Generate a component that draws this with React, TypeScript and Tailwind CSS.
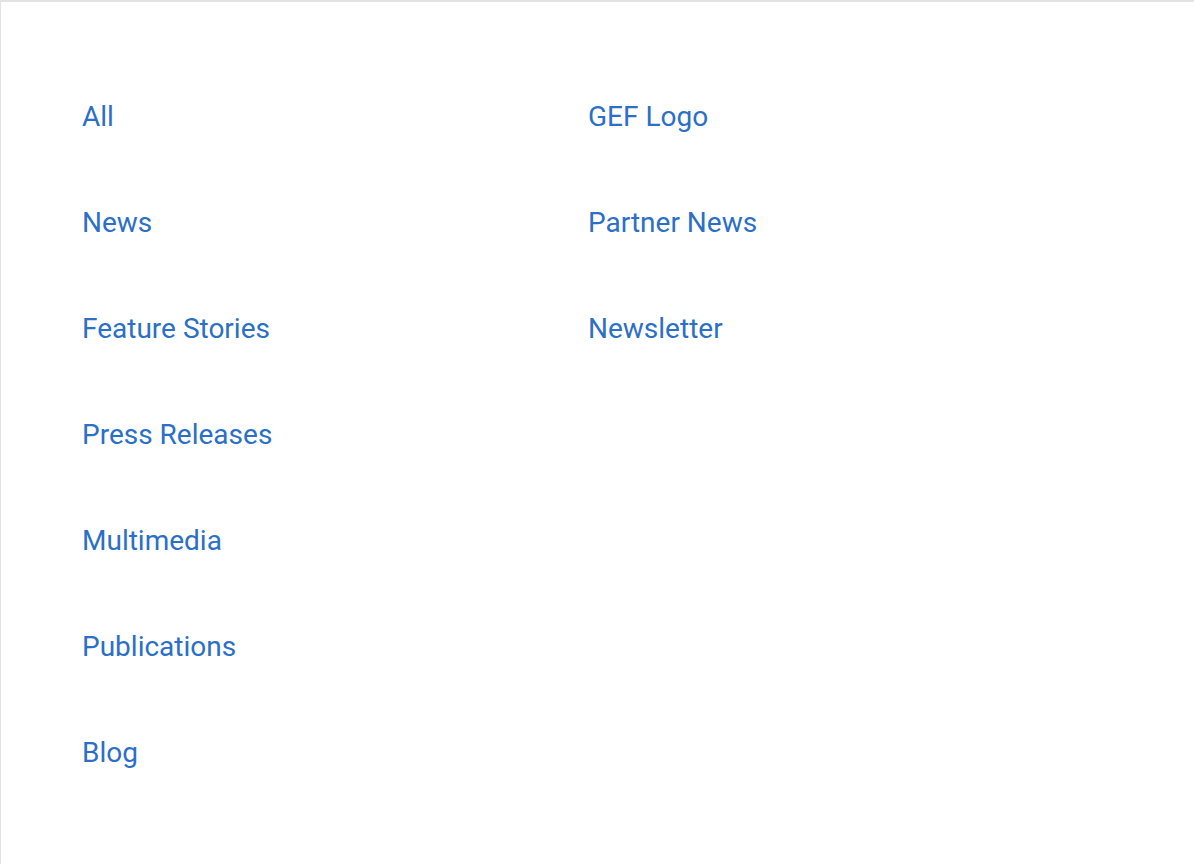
const leftLinks = [
  'All',
  'News',
  'Feature Stories',
  'Press Releases',
  'Multimedia',
  'Publications',
  'Blog',
];

const rightLinks = ['GEF Logo', 'Partner News', 'Newsletter'];

function LinkColumn({ items }: { items: string[] }) {
  return (
    <ul className="flex flex-col gap-[67px]">
      {items.map((item) => (
        <li key={item}>
          <a href="#" className="text-[28px] leading-[39px] text-[#2b6fc6] hover:underline">
            {item}
          </a>
        </li>
      ))}
    </ul>
  );
}

export default function App() {
  return (
    <div className="min-h-[864px] w-[1194px] bg-white font-['Roboto',sans-serif]">
      <div className="min-h-[864px] border-t-2 border-l border-[#e3e3e3] pt-[95px] pl-[81px]">
        <div className="grid grid-cols-[506px_1fr]">
          <LinkColumn items={leftLinks} />
          <LinkColumn items={rightLinks} />
        </div>
      </div>
    </div>
  );
}
